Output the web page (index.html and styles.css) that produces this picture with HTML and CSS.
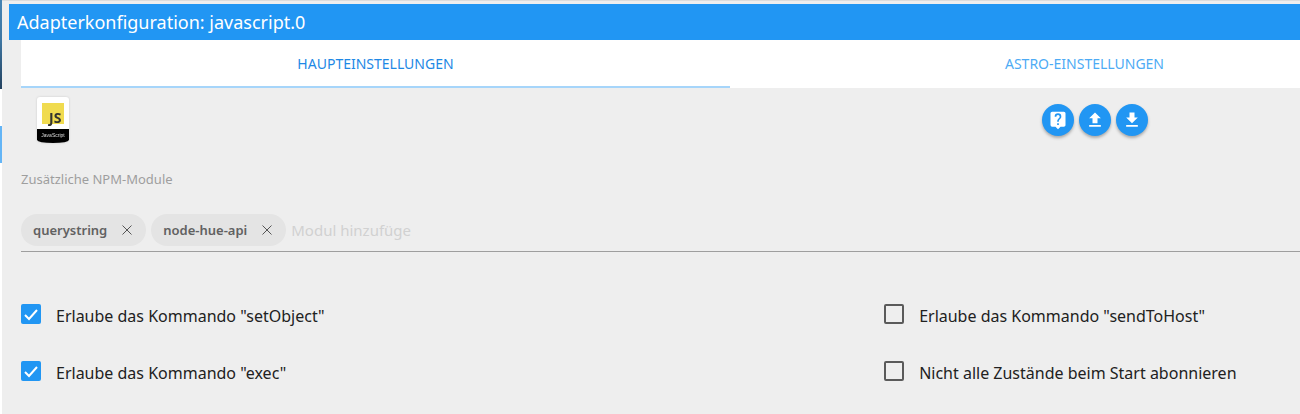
FILE: index.html
```html
<!DOCTYPE html>
<html lang="de">
<head>
<meta charset="utf-8">
<title>Adapterkonfiguration</title>
<link rel="stylesheet" href="styles.css">
</head>
<body>
<div class="backdrop">
  <div class="backdrop-header"></div>
  <div class="backdrop-gap"></div>
  <div class="backdrop-item"></div>
</div>
<div class="dialog">
  <header class="title-bar"><h1 class="title">Adapterkonfiguration: javascript.0</h1></header>
  <main class="content">
    <nav class="tabs">
      <a class="tab tab-active" href="#main">Haupteinstellungen</a>
      <a class="tab" href="#astro">Astro-Einstellungen</a>
    </nav>
    <div class="toolbar">
      <svg class="logo" viewBox="0 0 32 46" role="img" aria-label="JavaScript">
        <path d="M3 0H29Q32 0 32 3V42Q32 46 16 46Q0 46 0 42V3Q0 0 3 0Z" fill="#fff"/>
        <path d="M0 32H32V43Q31 46 16 46Q1 46 0 43Z" fill="#000"/>
        <rect x="5" y="6" width="22" height="21" fill="#f0db4f"/>
        <text class="logo-js" x="12" y="26">JS</text>
        <text class="logo-name" x="16" y="40" text-anchor="middle">JavaScript</text>
      </svg>
      <div class="actions">
        <button class="round-button" type="button" aria-label="Hilfe"><svg class="icon" viewBox="0 0 24 24"><path d="M19 2H5a2 2 0 0 0-2 2v14a2 2 0 0 0 2 2h4l3 3 3-3h4c1.100 0 2-.9 2-2V4a2 2 0 0 0-2-2zm-6 16h-2v-2h2v2zm2.070-7.750-.9.920C13.450 11.900 13 12.500 13 14h-2v-.5c0-1.100.450-2.100 1.170-2.830l1.240-1.260c.370-.360.590-.860.590-1.410a2 2 0 0 0-4 0H8a4 4 0 0 1 8 0c0 .880-.360 1.680-.930 2.250z"/></svg></button>
        <button class="round-button" type="button" aria-label="Hochladen"><svg class="icon" viewBox="0 0 24 24"><path d="M9 16h6v-6h4l-7-7-7 7h4zM5 18h14v2H5z"/></svg></button>
        <button class="round-button" type="button" aria-label="Herunterladen"><svg class="icon" viewBox="0 0 24 24"><path d="M19 9h-4V3H9v6H5l7 7zM5 18v2h14v-2z"/></svg></button>
      </div>
    </div>
    <label class="field-label" for="module">Zusätzliche NPM-Module</label>
    <div class="chips">
      <span class="chip">querystring<button class="chip-close" type="button" aria-label="querystring entfernen"><svg class="close-icon" viewBox="0 0 10 10"><path d="M0.500 0.500L9.500 9.500M9.500 0.500L0.500 9.500"/></svg></button></span>
      <span class="chip">node-hue-api<button class="chip-close" type="button" aria-label="node-hue-api entfernen"><svg class="close-icon" viewBox="0 0 10 10"><path d="M0.500 0.500L9.500 9.500M9.500 0.500L0.500 9.500"/></svg></button></span>
      <input class="chip-input" id="module" type="text" placeholder="Modul hinzufüge">
    </div>
    <div class="options">
      <label class="option"><input class="check" type="checkbox" checked>Erlaube das Kommando "setObject"</label>
      <label class="option"><input class="check" type="checkbox">Erlaube das Kommando "sendToHost"</label>
      <label class="option"><input class="check" type="checkbox" checked>Erlaube das Kommando "exec"</label>
      <label class="option"><input class="check" type="checkbox">Nicht alle Zustände beim Start abonnieren</label>
    </div>
  </main>
</div>
</body>
</html>
```
FILE: styles.css
```css
* { box-sizing: border-box; }
body {
  margin: 0;
  min-height: 100vh;
  display: flex;
  background: #fff;
  font-family: "Noto Sans", "Open Sans", sans-serif;
}
button { border: 0; padding: 0; cursor: pointer; }
.backdrop { flex: none; width: 2px; }
.backdrop-header { height: 89px; background: linear-gradient(#4583b3, #3f77a3 45%, #24425f); }
.backdrop-gap { height: 37px; }
.backdrop-item { height: 37px; background: #64b5f6; }
.dialog {
  flex: 1;
  min-width: 0;
  padding: 3px 0 0 7px;
  border-top: 1px solid #dcdcdc;
  overflow: hidden;
  background: #eee;
}
.title-bar { padding: 0 8px; background: #2196f3; }
.title { margin: 0; font-size: 18px; font-weight: 400; line-height: 36px; color: #fff; }
/* The form is wider than the visible part of the dialog */
.content { margin: 0 -139px 0 12px; }
.tabs { display: flex; background: #fff; }
.tab {
  flex: 1;
  height: 48px;
  border-bottom: 2px solid transparent;
  font-size: 14px;
  line-height: 48px;
  text-align: center;
  text-transform: uppercase;
  text-decoration: none;
  color: #4dabf5;
}
.tab-active { color: #1e88e5; border-color: #a6d5fa; }
.toolbar {
  display: grid;
  grid-template-columns: 18fr 7fr;
  align-items: start;
  padding-top: 9px;
}
.logo { width: 32px; height: 46px; margin-left: 16px; filter: drop-shadow(0 0 1px #ccc); }
.logo-js { font: 700 14px "Noto Sans", sans-serif; fill: #323330; }
.logo-name { font: 5px "Liberation Sans", sans-serif; fill: #ddd; }
.actions { display: flex; gap: 5px; padding-top: 7px; }
.round-button {
  display: grid;
  place-items: center;
  width: 32px;
  height: 32px;
  border-radius: 50%;
  background: #2196f3;
  box-shadow: 0 2px 3px #aaa;
}
.icon { width: 20px; height: 20px; fill: #fff; }
.field-label { display: block; margin-top: 26px; font-size: 13px; line-height: 20px; color: #9e9e9e; }
.chips {
  display: flex;
  gap: 5px;
  margin-top: 25px;
  padding-bottom: 5px;
  border-bottom: 1px solid #9e9e9e;
}
.chip {
  display: flex;
  align-items: center;
  height: 32px;
  padding: 0 12px;
  border-radius: 16px;
  background: #e4e4e4;
  font-size: 13px;
  font-weight: 600;
  color: #616161;
}
.chip-close { display: flex; margin-left: 13px; padding: 2px; background: none; }
.close-icon { width: 10px; height: 10px; stroke: #555; stroke-width: 1; fill: none; }
.chip-input {
  flex: 1;
  border: 0;
  padding: 0;
  outline: 0;
  background: none;
  font: inherit;
  font-size: 15px;
}
.chip-input::placeholder { color: #d1d1d1; opacity: 1; }
.options {
  display: grid;
  grid-template-columns: 14fr 9fr;
  row-gap: 33px;
  margin-top: 52px;
}
.option { display: flex; gap: 15px; font-size: 16px; line-height: 24px; color: #212121; }
.check {
  appearance: none;
  flex: none;
  width: 20px;
  height: 20px;
  margin: 0;
  border: 2px solid #5a5a5a;
  border-radius: 2px;
}
.check:checked {
  border: 0;
  background: #2196f3 url("data:image/svg+xml,%3Csvg xmlns='http://www.w3.org/2000/svg' viewBox='0 0 20 20'%3E%3Cpath d='M4 11l4 4 8-9' fill='none' stroke='white' stroke-width='2'/%3E%3C/svg%3E") center / 20px no-repeat;
}
```
